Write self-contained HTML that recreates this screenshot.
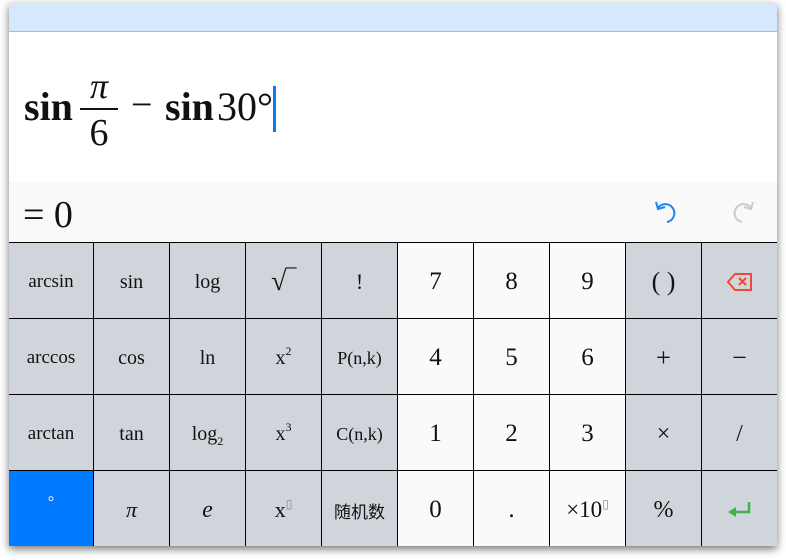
<!DOCTYPE html>
<html><head><meta charset="utf-8"><style>
*{margin:0;padding:0;box-sizing:border-box}
body{width:786px;height:560px;background:#fff;position:relative;overflow:hidden;font-family:"Liberation Serif","Noto Serif CJK SC",serif;color:#111}
#win{position:absolute;left:9px;top:3px;width:768px;height:543px;background:#fff;box-shadow:0 3px 8px rgba(0,0,0,.55)}
#bar{position:absolute;left:0;top:0;width:768px;height:29px;background:#d6e8fc;border-bottom:1px solid #a9bccf}
#res{position:absolute;left:0;top:179px;width:768px;height:60px;background:#f9f9f9}
.c{position:absolute;display:flex;align-items:center;justify-content:center;font-size:22px;background:#d0d5db;padding-top:3px}
.w{background:#fafafa;font-size:25px}
#grid{position:absolute;left:0;top:239px;width:768px;height:304px;background:#000}
sup{font-size:12px;vertical-align:9px;line-height:0}
sub{font-size:12px;vertical-align:-5px;line-height:0}
</style></head><body>
<div id="win">
<div id="bar"></div>
<div style="position:absolute;left:15px;top:80px;font-size:40px;font-weight:bold">sin</div>
<div style="position:absolute;left:71px;top:62px;width:38px;text-align:center;font-size:36px;font-style:italic">π</div>
<div style="position:absolute;left:71px;top:105px;width:38px;height:2px;background:#111"></div>
<div style="position:absolute;left:71px;top:108px;width:38px;text-align:center;font-size:38px">6</div>
<div style="position:absolute;left:122px;top:80px;font-size:38px">−</div>
<div style="position:absolute;left:156px;top:80px;font-size:40px;font-weight:bold">sin</div>
<div style="position:absolute;left:208px;top:80px;font-size:40px">30°</div>
<div style="position:absolute;left:264px;top:83px;width:3px;height:46px;background:#0a78f0"></div>
<div id="res">
<div style="position:absolute;left:14px;top:11px;font-size:38px">= 0</div>
<svg style="position:absolute;left:645px;top:18px" width="28" height="26" viewBox="0 0 28 26"><path d="M4 8 A9 9 0 1 1 13 22" fill="none" stroke="#1a86f5" stroke-width="2"/><path d="M2 2 L4 9 L11 7" fill="none" stroke="#1a86f5" stroke-width="2"/></svg>
<svg style="position:absolute;left:718px;top:18px" width="28" height="26" viewBox="0 0 28 26"><path d="M24 8 A9 9 0 1 0 15 22" fill="none" stroke="#ccc" stroke-width="2"/><path d="M26 2 L24 9 L17 7" fill="none" stroke="#ccc" stroke-width="2"/></svg>
</div>
<div id="grid">
<div class="c" style="left:0;top:1px;width:84px;height:75px;font-size:19px">arcsin</div>
<div class="c" style="left:85px;top:1px;width:75px;height:75px;font-size:20px">sin</div>
<div class="c" style="left:161px;top:1px;width:75px;height:75px;font-size:20px">log</div>
<div class="c" style="left:237px;top:1px;width:75px;height:75px;font-size:28px">√‾</div>
<div class="c" style="left:313px;top:1px;width:75px;height:75px">!</div>
<div class="c w" style="left:389px;top:1px;width:75px;height:75px">7</div>
<div class="c w" style="left:465px;top:1px;width:75px;height:75px">8</div>
<div class="c w" style="left:541px;top:1px;width:75px;height:75px">9</div>
<div class="c" style="left:617px;top:1px;width:75px;height:75px;font-size:26px">( )</div>
<div class="c" style="left:693px;top:1px;width:75px;height:75px"><svg width="26" height="18" viewBox="0 0 26 18"><path d="M8 1 H24 V17 H8 L1 9 Z" fill="none" stroke="#ee4a3c" stroke-width="2"/><path d="M12 5 L19 12 M19 5 L12 12" stroke="#ee4a3c" stroke-width="2"/></svg></div>

<div class="c" style="left:0;top:77px;width:84px;height:75px;font-size:19px">arccos</div>
<div class="c" style="left:85px;top:77px;width:75px;height:75px;font-size:20px">cos</div>
<div class="c" style="left:161px;top:77px;width:75px;height:75px;font-size:20px">ln</div>
<div class="c" style="left:237px;top:77px;width:75px;height:75px;font-size:20px"><span>x<sup>2</sup></span></div>
<div class="c" style="left:313px;top:77px;width:75px;height:75px;font-size:18px">P(n,k)</div>
<div class="c w" style="left:389px;top:77px;width:75px;height:75px">4</div>
<div class="c w" style="left:465px;top:77px;width:75px;height:75px">5</div>
<div class="c w" style="left:541px;top:77px;width:75px;height:75px">6</div>
<div class="c" style="left:617px;top:77px;width:75px;height:75px;font-size:26px">+</div>
<div class="c" style="left:693px;top:77px;width:75px;height:75px;font-size:26px">−</div>

<div class="c" style="left:0;top:153px;width:84px;height:75px;font-size:19px">arctan</div>
<div class="c" style="left:85px;top:153px;width:75px;height:75px;font-size:20px">tan</div>
<div class="c" style="left:161px;top:153px;width:75px;height:75px;font-size:20px"><span>log<sub>2</sub></span></div>
<div class="c" style="left:237px;top:153px;width:75px;height:75px;font-size:20px"><span>x<sup>3</sup></span></div>
<div class="c" style="left:313px;top:153px;width:75px;height:75px;font-size:18px">C(n,k)</div>
<div class="c w" style="left:389px;top:153px;width:75px;height:75px">1</div>
<div class="c w" style="left:465px;top:153px;width:75px;height:75px">2</div>
<div class="c w" style="left:541px;top:153px;width:75px;height:75px">3</div>
<div class="c" style="left:617px;top:153px;width:75px;height:75px;font-size:24px">×</div>
<div class="c" style="left:693px;top:153px;width:75px;height:75px;font-size:24px">/</div>

<div class="c" style="left:0;top:229px;width:84px;height:75px;background:#007aff;color:#fff;font-size:16px;padding-bottom:12px;padding-top:0">°</div>
<div class="c" style="left:85px;top:229px;width:75px;height:75px;font-size:22px;font-style:italic">π</div>
<div class="c" style="left:161px;top:229px;width:75px;height:75px;font-size:24px;font-style:italic">e</div>
<div class="c" style="left:237px;top:229px;width:75px;height:75px;font-size:22px"><span>x<sup style="color:#888">▯</sup></span></div>
<div class="c" style="left:313px;top:229px;width:75px;height:75px;font-size:17px;font-family:'Noto Sans CJK SC',sans-serif">随机数</div>
<div class="c w" style="left:389px;top:229px;width:75px;height:75px">0</div>
<div class="c w" style="left:465px;top:229px;width:75px;height:75px">.</div>
<div class="c w" style="left:541px;top:229px;width:75px;height:75px;font-size:23px"><span>×10<sup style="color:#888">▯</sup></span></div>
<div class="c" style="left:617px;top:229px;width:75px;height:75px;font-size:24px">%</div>
<div class="c" style="left:693px;top:229px;width:75px;height:75px"><svg width="26" height="18" viewBox="0 0 26 18"><path d="M22 1 V11 H6" fill="none" stroke="#3cb44b" stroke-width="2.5"/><path d="M1 11 L9 6 V16 Z" fill="#3cb44b"/></svg></div>
</div>
</div>
</body></html>
